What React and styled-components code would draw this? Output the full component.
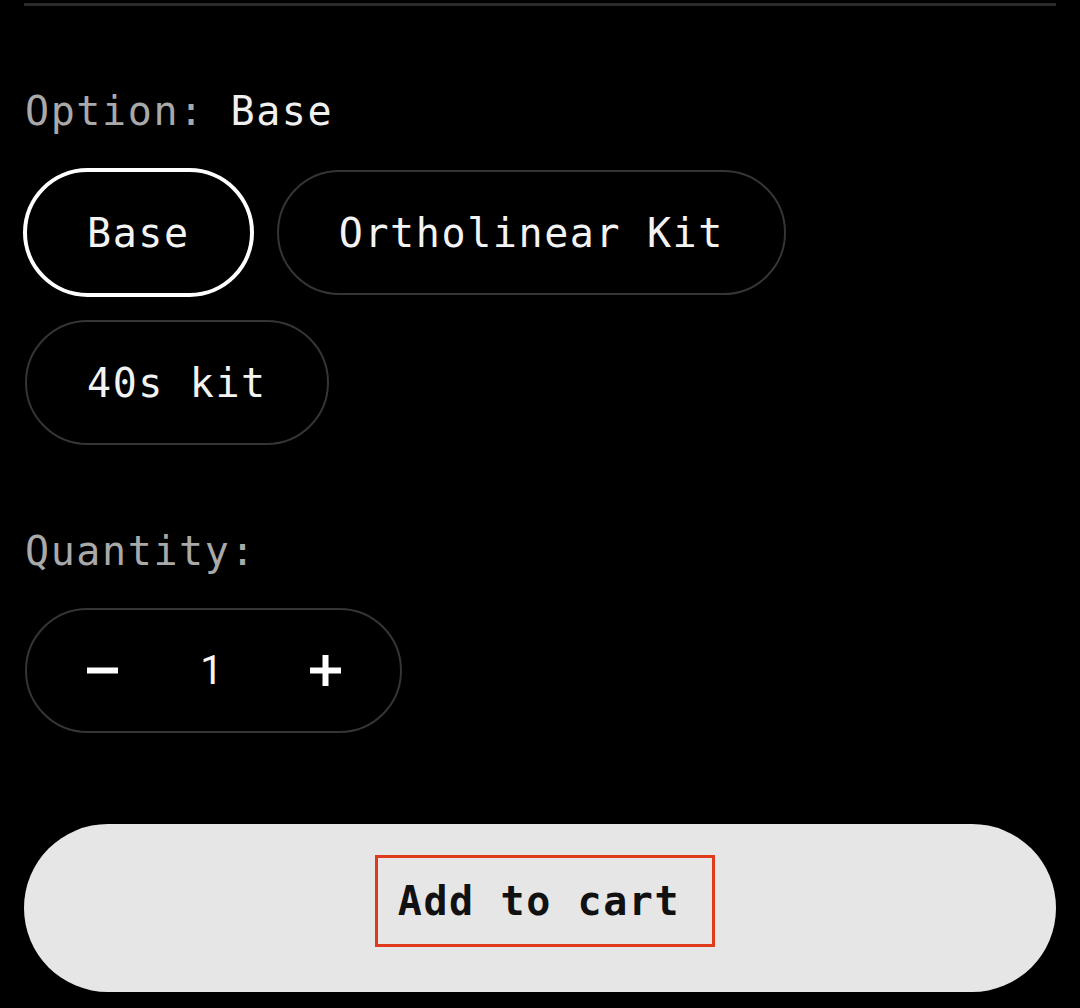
import styled, { createGlobalStyle } from "styled-components";
import { useState } from "react";

const GlobalStyle = createGlobalStyle`
  html, body {
    margin: 0;
    padding: 0;
    background: #000;
  }
  body {
    font-family: "DejaVu Sans Mono", "Liberation Mono", monospace;
    color: #f3f3f3;
  }
`;

const Page = styled.div`
  padding: 3px 24px 16px;
  min-height: 1008px;
  box-sizing: border-box;
  background: #000;
  display: flex;
  flex-direction: column;
`;

const Divider = styled.div`
  height: 3px;
  background: #2b2b2b;
`;

const Label = styled.div`
  margin-top: ${(props) => props.top}px;
  padding-left: 1px;
  font-size: 40px;
  line-height: 46px;
  letter-spacing: 1.6px;
  color: #a9a9a9;
`;

const Value = styled.span`
  color: #f0f0f0;
`;

const Pills = styled.div`
  margin-top: 36px;
  padding-left: 1px;
  display: flex;
  flex-wrap: wrap;
  gap: 25px;
`;

const Pill = styled.button`
  height: 125px;
  box-sizing: border-box;
  padding: 0 60px;
  border-radius: 63px;
  border: 2px solid ${(props) => (props.active ? "#fff" : "#353535")};
  box-shadow: ${(props) => (props.active ? "0 0 0 2px #fff" : "none")};
  background: #000;
  color: #f3f3f3;
  font-family: inherit;
  font-size: 40px;
  letter-spacing: 1.6px;
  display: inline-flex;
  align-items: center;
  cursor: pointer;
`;

const Quantity = styled.div`
  margin-top: 34px;
  margin-left: 1px;
  width: 377px;
  height: 125px;
  box-sizing: border-box;
  border: 2px solid #353535;
  border-radius: 63px;
  display: grid;
  grid-template-columns: 150px 1fr 150px;
  align-items: stretch;
`;

const QtyButton = styled.button`
  background: none;
  border: none;
  padding: 0;
  display: flex;
  align-items: center;
  justify-content: center;
  cursor: pointer;
`;

const QtyValue = styled.div`
  display: flex;
  align-items: center;
  justify-content: center;
  font-family: Roboto, "Noto Sans", sans-serif;
  font-size: 40px;
  color: #f5f5f5;
  padding-right: 4px;
`;

const CartButton = styled.button`
  margin-top: 91px;
  height: 168px;
  width: 100%;
  border: none;
  border-radius: 84px;
  background: #e6e6e6;
  display: flex;
  align-items: center;
  justify-content: center;
  cursor: pointer;
`;

const CartLabel = styled.span`
  height: 92px;
  box-sizing: border-box;
  margin: 0 0 14px 10px;
  padding: 0 32px 0 20px;
  border: 3px solid #e03a1d;
  display: inline-flex;
  align-items: center;
  font-family: "DejaVu Sans Mono", "Liberation Mono", monospace;
  font-weight: bold;
  font-size: 40px;
  letter-spacing: 1.6px;
  color: #111;
`;

const Minus = () => (
  <svg width="31" height="31" viewBox="0 0 31 31">
    <rect x="0" y="12.5" width="31" height="6" fill="#fff" />
  </svg>
);

const Plus = () => (
  <svg width="31" height="31" viewBox="0 0 31 31">
    <rect x="0" y="12.5" width="31" height="6" fill="#fff" />
    <rect x="12.5" y="0" width="6" height="31" fill="#fff" />
  </svg>
);

const options = ["Base", "Ortholinear Kit", "40s kit"];

const App = () => {
  const [option, setOption] = useState("Base");
  const [qty, setQty] = useState(1);

  return (
    <Page>
      <GlobalStyle />
      <Divider />
      <Label top={82}>
        Option: <Value>{option}</Value>
      </Label>
      <Pills>
        {options.map((o) => (
          <Pill key={o} active={o === option} onClick={() => setOption(o)}>
            {o}
          </Pill>
        ))}
      </Pills>
      <Label top={83}>Quantity:</Label>
      <Quantity>
        <QtyButton onClick={() => setQty(Math.max(1, qty - 1))}>
          <Minus />
        </QtyButton>
        <QtyValue>{qty}</QtyValue>
        <QtyButton onClick={() => setQty(qty + 1)}>
          <Plus />
        </QtyButton>
      </Quantity>
      <CartButton>
        <CartLabel>Add to cart</CartLabel>
      </CartButton>
    </Page>
  );
};

export default App;
